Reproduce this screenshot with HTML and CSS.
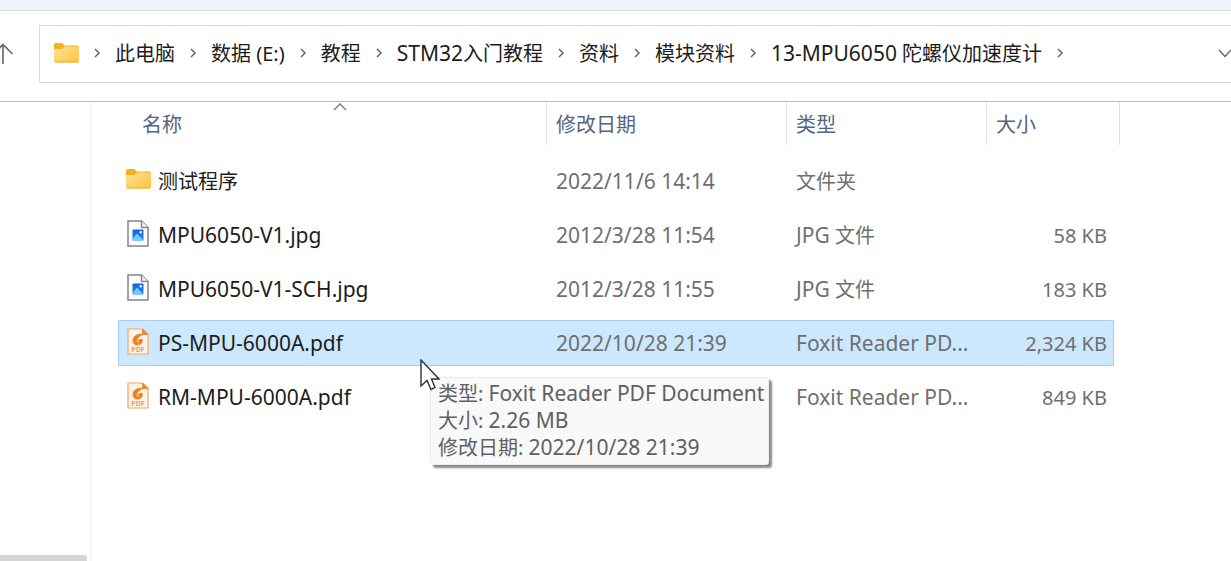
FILE: index.html
```html
<!DOCTYPE html>
<html lang="zh-CN">
<head>
    <meta charset="UTF-8">
    <meta name="viewport" content="width=device-width, initial-scale=1.0">
    <title>13-MPU6050 陀螺仪加速度计</title>
    <link rel="stylesheet" href="styles.css">
</head>
<body>
    <!-- shared icons -->
    <svg class="sprite" aria-hidden="true">
        <defs>
            <linearGradient id="folder-fill" x1="0" y1="0" x2="1" y2="1">
                <stop offset="0" stop-color="#ffe29a"/>
                <stop offset="1" stop-color="#fcc43c"/>
            </linearGradient>
            <linearGradient id="photo-fill" x1="0" y1="0" x2="0" y2="1">
                <stop offset="0" stop-color="#1565d0"/>
                <stop offset="1" stop-color="#1c8bf0"/>
            </linearGradient>
        </defs>
        <symbol id="folder" viewBox="0 0 25 20">
            <path d="M0 2Q0 0 2 0H8L11 2.500H23Q25 2.500 25 4.500V8H0Z" fill="#f2b21e"/>
            <path d="M0 6H8L11 3.500H23.500Q25 3.500 25 5V18Q25 19.500 23.500 19.500H1.500Q0 19.500 0 18Z" fill="url(#folder-fill)"/>
            <path d="M1 19H24" stroke="#e9ae35" stroke-width="1"/>
        </symbol>
        <symbol id="jpg" viewBox="0 0 22 27">
            <path d="M1 1H14.500L21 7.500V26H1Z" fill="#fff" stroke="#858585" stroke-width="1.500"/>
            <path d="M14.500 1V7.500H21" fill="#f4f4f4" stroke="#858585" stroke-width="1.500"/>
            <rect x="5.500" y="9.500" width="11" height="11" rx="1" fill="url(#photo-fill)"/>
            <path d="M5.500 19L10 13.500L16.500 20.500H6.500Z" fill="#74c8fa"/>
            <circle cx="13.700" cy="12.300" r="1.200" fill="#fff"/>
        </symbol>
        <symbol id="pdf" viewBox="0 0 22 27">
            <path d="M1 1H15.500L21 6.500V26H1Z" fill="#fef3e6" stroke="#eda767" stroke-width="1.200"/>
            <path d="M15.500 1V6.500H21Z" fill="#e88b3b" stroke="#e88b3b"/>
            <path d="M15.500 6.500C10 5.500 6 8.500 6 12.500C6 16 8.500 17.500 11 17C14.500 16.500 16 14 15 11L10.500 12.500L12.500 13C12 14.700 10.500 15 9.900 14C8.800 12 11 9 15.500 6.500Z" fill="#e98224" stroke="#e98224" stroke-width=".8"/>
        </symbol>
        <symbol id="chevron" viewBox="0 0 6 10">
            <path d="M1 1L5 5L1 9" fill="none" stroke="#666" stroke-width="1.500"/>
        </symbol>
    </svg>

    <div class="tab-strip"></div>

    <header class="toolbar">
        <button class="up" aria-label="上移">
            <svg width="22" height="22" viewBox="0 0 22 22"><path d="M11 21V1M1.500 11L11 1.500L20.500 11" fill="none" stroke="#666" stroke-width="1.600"/></svg>
        </button>
        <nav class="address">
            <svg class="folder"><use href="#folder"/></svg>
            <svg class="sep"><use href="#chevron"/></svg>
            <a href="#">此电脑</a>
            <svg class="sep"><use href="#chevron"/></svg>
            <a href="#">数据 (E:)</a>
            <svg class="sep"><use href="#chevron"/></svg>
            <a href="#">教程</a>
            <svg class="sep"><use href="#chevron"/></svg>
            <a href="#"><span class="latin">STM32</span>入门教程</a>
            <svg class="sep"><use href="#chevron"/></svg>
            <a href="#">资料</a>
            <svg class="sep"><use href="#chevron"/></svg>
            <a href="#">模块资料</a>
            <svg class="sep"><use href="#chevron"/></svg>
            <a href="#"><span class="latin">13-MPU6050</span> 陀螺仪加速度计</a>
            <svg class="sep"><use href="#chevron"/></svg>
            <button class="history" aria-label="以前的位置">
                <svg width="14" height="9" viewBox="0 0 14 9"><path d="M1 1L7 7.500L13 1" fill="none" stroke="#666" stroke-width="1.500"/></svg>
            </button>
        </nav>
    </header>

    <div class="content">
        <aside class="sidebar">
            <div class="scroll-thumb"></div>
        </aside>
        <main>
            <table>
                <colgroup>
                    <col class="col-name">
                    <col class="col-date">
                    <col class="col-type">
                    <col class="col-size">
                </colgroup>
                <thead>
                    <tr>
                        <th class="name">
                            <button>名称
                                <svg class="sort" viewBox="0 0 14 8"><path d="M1 7L7 1L13 7" fill="none" stroke="#777" stroke-width="1.300"/></svg>
                            </button>
                        </th>
                        <th><button>修改日期</button></th>
                        <th><button>类型</button></th>
                        <th><button>大小</button></th>
                    </tr>
                </thead>
                <tbody>
                    <tr>
                        <td class="name"><a href="#"><svg class="folder"><use href="#folder"/></svg>测试程序</a></td>
                        <td><span class="latin">2022/11/6 14:14</span></td>
                        <td>文件夹</td>
                        <td class="size"></td>
                    </tr>
                    <tr>
                        <td class="name"><a href="#"><svg class="file"><use href="#jpg"/></svg><span class="latin">MPU6050-V1.jpg</span></a></td>
                        <td><span class="latin">2012/3/28 11:54</span></td>
                        <td><span class="latin">JPG</span> 文件</td>
                        <td class="size">58 KB</td>
                    </tr>
                    <tr>
                        <td class="name"><a href="#"><svg class="file"><use href="#jpg"/></svg><span class="latin">MPU6050-V1-SCH.jpg</span></a></td>
                        <td><span class="latin">2012/3/28 11:55</span></td>
                        <td><span class="latin">JPG</span> 文件</td>
                        <td class="size">183 KB</td>
                    </tr>
                    <tr class="selected">
                        <td class="name">
                            <a href="#"><svg class="file"><use href="#pdf"/><text x="11" y="24" class="pdf-mark">PDF</text></svg><span class="latin">PS-MPU-6000A.pdf</span></a>
                            <div class="tooltip" role="tooltip">
                                <div>类型: <span class="latin">Foxit Reader PDF Document</span></div>
                                <div>大小: <span class="latin">2.26 MB</span></div>
                                <div>修改日期: <span class="latin">2022/10/28 21:39</span></div>
                            </div>
                            <svg class="cursor" viewBox="0 0 20 32"><path d="M1 1V27L7 21.500L11 30.500L15 28.500L11.500 20H19Z" fill="#fff" stroke="#333" stroke-width="1.400"/></svg>
                        </td>
                        <td><span class="latin">2022/10/28 21:39</span></td>
                        <td><span class="latin">Foxit Reader PD...</span></td>
                        <td class="size">2,324 KB</td>
                    </tr>
                    <tr>
                        <td class="name"><a href="#"><svg class="file"><use href="#pdf"/><text x="11" y="24" class="pdf-mark">PDF</text></svg><span class="latin">RM-MPU-6000A.pdf</span></a></td>
                        <td></td>
                        <td><span class="latin">Foxit Reader PD...</span></td>
                        <td class="size">849 KB</td>
                    </tr>
                </tbody>
            </table>
        </main>
    </div>
</body>
</html>
```
FILE: styles.css
```css
* {
    box-sizing: border-box;
}
body {
    margin: 0;
    min-height: 100vh;
    display: flex;
    flex-direction: column;
    overflow-x: hidden;
    background: #fff;
    color: #1c1c1c;
    font-family: "Noto Sans", "Noto Sans CJK SC", sans-serif;
    font-size: 20px;
    line-height: 27px;
}
button {
    padding: 0;
    border: none;
    background: none;
    color: inherit;
    font: inherit;
}
a {
    color: inherit;
    text-decoration: none;
}
svg {
    flex: none;
    display: block;
}
.sprite {
    position: absolute;
    width: 0;
    height: 0;
}
.latin {
    font-size: 21px;
}
.pdf-mark {
    font-size: 7px;
    font-weight: 700;
    fill: #eda05c;
    text-anchor: middle;
}
.folder {
    width: 25px;
    height: 20px;
}
.file {
    width: 22px;
    height: 27px;
}

/* top */
.tab-strip {
    height: 11px;
    background: #eff2fa;
    border-bottom: 1px solid #dcdde0;
}
.toolbar {
    display: flex;
    align-items: center;
    height: 91px;
    padding: 14px 0 18px;
    border-bottom: 1px solid #bdbdbd;
    overflow: hidden;
}
.up {
    width: 39px;
    margin-right: 8px;
    margin-left: -8px;
}
.address {
    flex: 1;
    display: flex;
    align-items: center;
    height: 58px;
    margin-right: -2px;
    padding: 0 0 2px 14px;
    border: 1px solid #d9d9d9;
    white-space: nowrap;
}
.sep {
    width: 36px;
    height: 10px;
}
.history {
    margin-left: auto;
}

/* body */
.content {
    flex: 1;
    display: flex;
}
.sidebar {
    flex: none;
    display: flex;
    flex-direction: column;
    justify-content: flex-end;
    width: 91px;
    padding-right: 3px;
    border-right: 1px solid #f3f3f3;
}
.scroll-thumb {
    height: 6px;
    background: #d4d4d4;
    border-radius: 0 3px 0 0;
}
main {
    flex: 1;
    padding-left: 27px;
}
table {
    width: 1002px;
    table-layout: fixed;
    border-collapse: separate;
    border-spacing: 0;
}
.col-name {
    width: 429px;
}
.col-date {
    width: 240px;
}
.col-type {
    width: 200px;
}
.col-size {
    width: 133px;
}
th {
    padding: 0 0 9px;
    font-weight: 400;
}
th.name {
    padding-left: 15px;
}
th button {
    position: relative;
    display: block;
    width: 100%;
    height: 43px;
    padding: 2px 0 0 9px;
    border-right: 1px solid #e0e0e0;
    color: #53657f;
    text-align: left;
}
.sort {
    position: absolute;
    top: 1px;
    left: 50%;
    width: 14px;
    height: 8px;
    margin-left: -7px;
}
td {
    position: relative;
    height: 54px;
    padding: 0 0 0 9px;
    border: 0 solid transparent;
    border-width: 4px 0;
    background-clip: padding-box;
    color: #6f6f6f;
    white-space: nowrap;
}
td.name {
    padding-left: 8px;
    color: #1c1c1c;
}
td.name a {
    display: flex;
    align-items: center;
}
td .folder {
    margin: 0 7px 4px 0;
}
td .file {
    margin: 0 9px 4px 1px;
}
td.size {
    padding-right: 7px;
    border-right-width: 6px;
    text-align: right;
}
.selected td {
    background-color: #cce8ff;
    background-image: linear-gradient(#a6d0f2, #a6d0f2), linear-gradient(#a6d0f2, #a6d0f2);
    background-position: top, bottom;
    background-size: 100% 1px;
    background-repeat: no-repeat;
}
.selected td.name {
    border-radius: 2px 0 0 2px;
    box-shadow: inset 1px 0 #a6d0f2;
}
.selected td.size {
    box-shadow: inset -1px 0 #a6d0f2;
}

/* hover info */
.tooltip {
    position: absolute;
    z-index: 1;
    top: 57px;
    left: 312px;
    padding: 2px 4px 3px 7px;
    background: #f9f9f9;
    border: 1px solid #ececec;
    border-radius: 3px;
    box-shadow: 3px 3px 2px #8c8c8c;
    color: #606060;
}
.cursor {
    position: absolute;
    z-index: 2;
    top: 39px;
    left: 302px;
    width: 20px;
    height: 32px;
}
```
